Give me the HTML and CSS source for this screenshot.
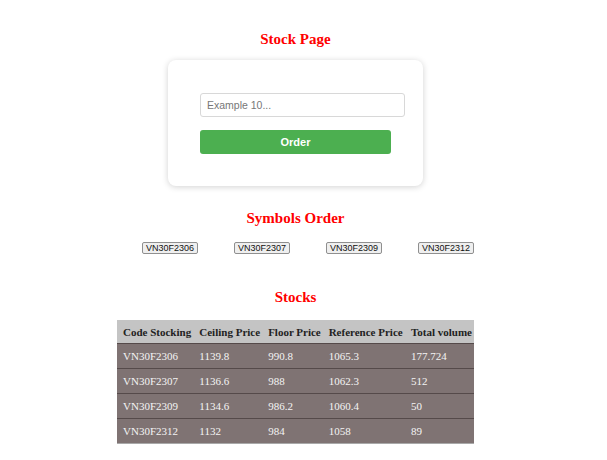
FILE: index.html
```html
<!DOCTYPE html>
<html>
<head>
	<meta charset="utf-8">
	<meta name="viewport" content="width=device-width, initial-scale=1">
	<title>Stock Page</title>
	<link rel="stylesheet" href="styles.css">
</head>

<body>
  <div class="page">
	<h2 class="title">Stock Page</h2>

	<div class="order-card">
		<input type="text" class="order-input" placeholder="Example 10...">
		<button class="order-button">Order</button>
	</div>

	<h2 class="title title-symbols">Symbols Order</h2>
	<div class="symbols">
		<button class="symbol">VN30F2306</button>
		<button class="symbol">VN30F2307</button>
		<button class="symbol">VN30F2309</button>
		<button class="symbol">VN30F2312</button>
	</div>

	<h2 class="title title-stocks">Stocks</h2>
	<table class="stocks">
		<thead>
			<tr>
				<th>Code Stocking</th>
				<th>Ceiling Price</th>
				<th>Floor Price</th>
				<th>Reference Price</th>
				<th>Total volume</th>
			</tr>
		</thead>
		<tbody>
			<tr><td>VN30F2306</td><td>1139.8</td><td>990.8</td><td>1065.3</td><td>177.724</td></tr>
			<tr><td>VN30F2307</td><td>1136.6</td><td>988</td><td>1062.3</td><td>512</td></tr>
			<tr><td>VN30F2309</td><td>1134.6</td><td>986.2</td><td>1060.4</td><td>50</td></tr>
			<tr><td>VN30F2312</td><td>1132</td><td>984</td><td>1058</td><td>89</td></tr>
		</tbody>
	</table>
  </div>
</body>
</html>
```

FILE: styles.css
```css
html{font-family: "Liberation Serif", "Times New Roman", serif;}
body{
	margin: 0;
	padding: 0;
	background: #fff;
}

.page {
  width: 591px;
  display: flex;
  flex-direction: column;
  align-items: center;
}

.title {
  margin: 31px 0 0;
  color: #ff0000;
  font-size: 15px;
  line-height: 17px;
  font-weight: bold;
  text-align: center;
}

.order-card {
  margin-top: 12px;
  width: 191px;
  padding: 33px 32px 32px;
  background: #fff;
  border-radius: 8px;
  box-shadow: 0 1px 6px rgba(0, 0, 0, 0.18);
  display: flex;
  flex-direction: column;
}

.order-input {
  width: 100%;
  height: 10px;
  padding: 6px;
  margin: 0;
  border: 1px solid #d8d8d8;
  border-radius: 3px;
  font-family: "Liberation Sans", Arial, sans-serif;
  font-size: 10.5px;
  line-height: 10px;
  color: #333;
}

.order-input::placeholder {
  color: #777;
}

.order-button {
  margin-top: 13px;
  height: 24px;
  border: none;
  border-radius: 3px;
  background-color: #4caf50;
  color: white;
  font-family: "Liberation Sans", Arial, sans-serif;
  font-size: 11px;
  font-weight: bold;
  cursor: pointer;
}

.title-symbols {
  margin-top: 24px;
}

.symbols {
  margin-top: 15px;
  padding-left: 25px;
  display: flex;
  gap: 36px;
}

.symbol {
  width: 56px;
  height: 12px;
  padding: 0;
  border: 1px solid #8f8f8f;
  border-radius: 2px;
  background: #efefef;
  color: #111;
  font-family: "Liberation Sans", Arial, sans-serif;
  font-size: 9px;
  line-height: 10px;
}

.title-stocks {
  margin-top: 35px;
}

.stocks {
  margin-top: 14px;
  width: 357px;
  border-collapse: collapse;
  font-size: 11px;
  border-bottom: 1px solid #a9a9a9;
}

.stocks th {
  height: 23px;
  padding: 0 1px 0 6px;
  background: #c4c4c4;
  color: #222;
  text-align: left;
  font-weight: bold;
  white-space: nowrap;
}

.stocks td {
  height: 24px;
  padding: 0 1px 0 6px;
  background: #7f7373;
  color: #f4f4f4;
  border-top: 1px solid #554a4a;
}
```
